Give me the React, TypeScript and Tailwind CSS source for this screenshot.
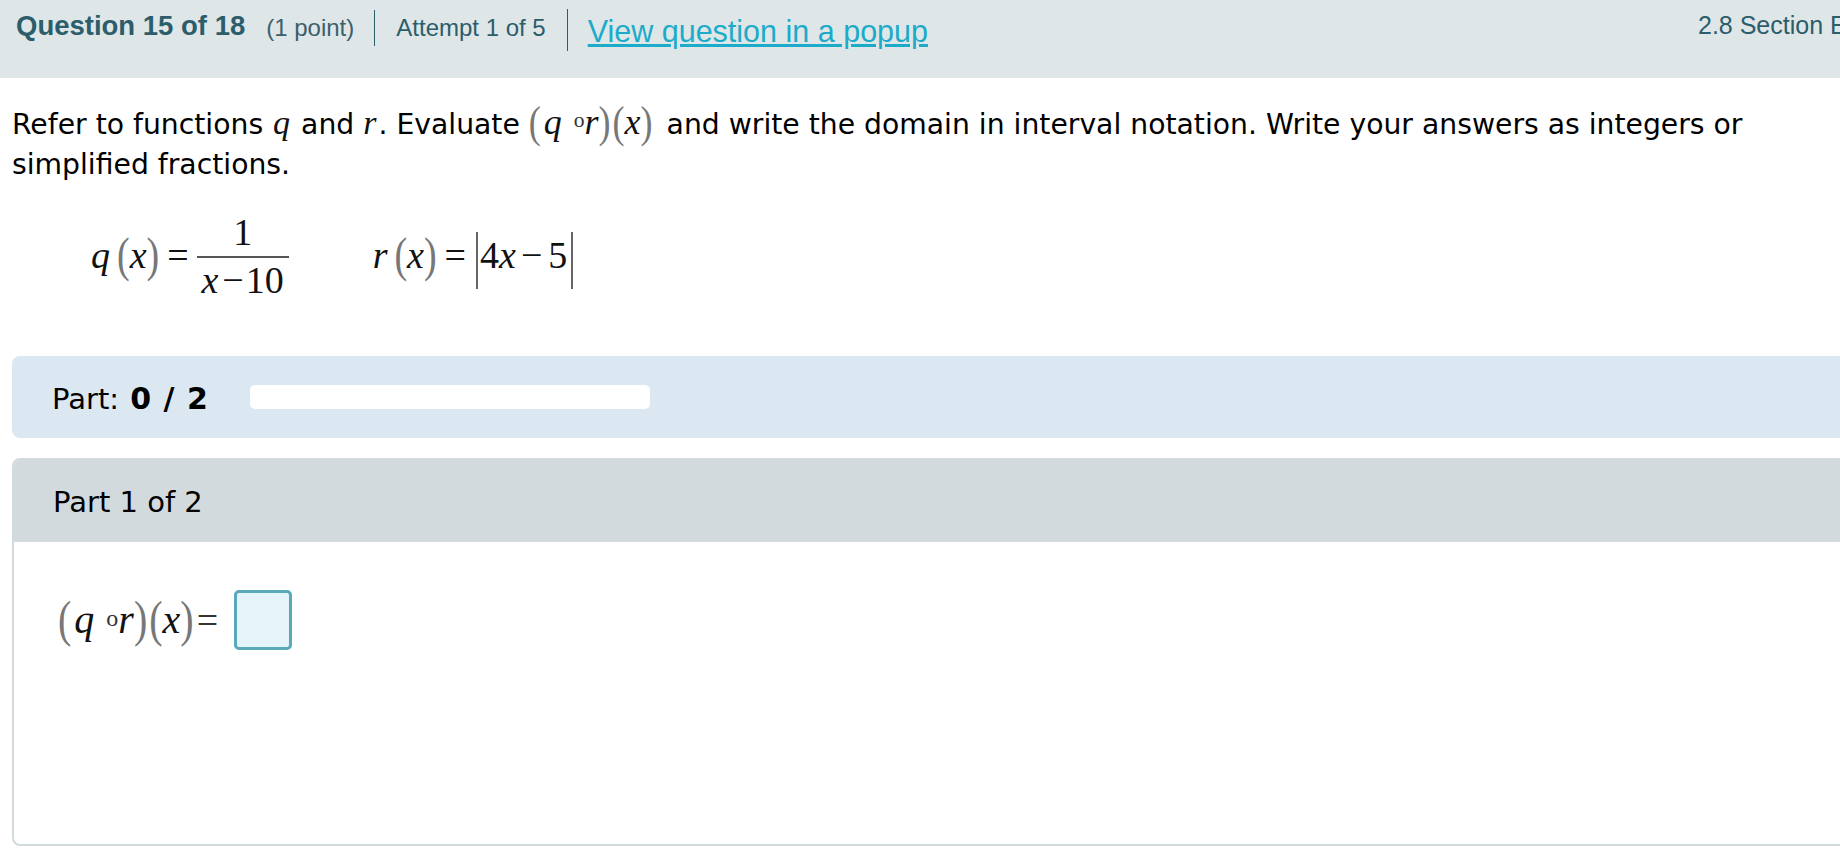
const serif = "font-['Liberation_Serif',serif]";

function Paren({ c, className = "" }: { c: string; className?: string }) {
  return <span className={`${serif} not-italic font-normal text-[#777] scale-y-125 inline-block ${className}`}>{c}</span>;
}

function Var({ c, className = "" }: { c: string; className?: string }) {
  return <i className={`${serif} text-[#111] ${className}`}>{c}</i>;
}

function Compose({ size, className = "" }: { size: string; className?: string }) {
  return (
    <span className={`inline-flex items-baseline leading-none align-baseline ${size} ${serif} ${className}`}>
      <Paren c="(" />
      <span className="ml-[3px]"><Var c="q" /></span>
      <span className="ml-[12px] text-[0.6em] relative bottom-[7px] text-[#333]">o</span>
      <Var c="r" />
      <Paren c=")" />
      <Paren c="(" className="ml-[2px]" />
      <Var c="x" />
      <Paren c=")" />
    </span>
  );
}

export default function App() {
  return (
    <div className="w-[1840px] h-[852px] overflow-hidden bg-white font-['DejaVu_Sans',sans-serif] text-black">
      <div className="w-[1900px]">
        <header className="h-[78px] bg-[#dfe6e8] flex items-start justify-between pl-[16px] font-['Liberation_Sans',sans-serif] text-[#2b5d6b] whitespace-nowrap">
          <div className="flex items-start">
            <span className="text-[27.5px] font-bold mt-[11px] leading-[30px]">Question 15 of 18</span>
            <span className="text-[24px] ml-[21px] mt-[14px] leading-[28px] text-[#3d5f6a]">(1 point)</span>
            <span className="w-[1px] h-[36px] bg-[#2b5d6b] ml-[20px] mt-[10px]" />
            <span className="text-[24px] ml-[21px] mt-[14px] leading-[28px]">Attempt 1 of 5</span>
            <span className="w-[1px] h-[42px] bg-[#2b5d6b] ml-[21px] mt-[9px]" />
            <a className="text-[30.5px] text-[#1cabc9] underline ml-[20px] mt-[14px] leading-[34px]">View question in a popup</a>
          </div>
          <span className="text-[25px] mt-[11px] leading-[28px] w-[202px]">2.8 Section Exercises</span>
        </header>

        <p className="text-[28.25px] leading-[40px] pl-[12px] mt-[26px] whitespace-nowrap">
          Refer to functions <Var c="q" className="text-[34px] leading-none ml-[1px] mr-[2px]" /> and <Var c="r" className="text-[34px] leading-none mr-[2px]" />. Evaluate <Compose size="text-[36px]" className="mr-[5px]" /> and write the domain in interval notation. Write your answers as integers or
          <br />
          simplified fractions.
        </p>

        <div className={`flex items-center mt-[26px] pl-[91px] h-[88px] ${serif} text-[38px] text-[#111] whitespace-nowrap`}>
          <Var c="q" />
          <Paren c="(" className="ml-[7px]" />
          <Var c="x" />
          <Paren c=")" />
          <span className="ml-[8px]">=</span>
          <span className="flex flex-col items-center ml-[8px] w-[92px]">
            <span className="leading-[48px]">1</span>
            <span className="h-[2px] w-full bg-[#555]" />
            <span className="leading-[44px]"><Var c="x" /><span className="ml-[4px]">−</span><span className="ml-[2px]">10</span></span>
          </span>
          <span className="ml-[84px]"><Var c="r" /></span>
          <Paren c="(" className="ml-[7px]" />
          <Var c="x" />
          <Paren c=")" />
          <span className="ml-[8px]">=</span>
          <span className="ml-[10px] mt-[10px] w-[2px] h-[57px] bg-[#666]" />
          <span className="ml-[2px]">4</span>
          <Var c="x" />
          <span className="ml-[5px]">−</span>
          <span className="ml-[6px]">5</span>
          <span className="ml-[4px] mt-[10px] w-[2px] h-[57px] bg-[#666]" />
        </div>

        <div className="mt-[57px] ml-[12px] h-[82px] bg-[#dce8f1] rounded-l-[8px] flex items-center pl-[40px] pt-[3px] text-[29px]">
          <span className="w-[198px] whitespace-nowrap">Part: <b className="text-[30px] ml-[2px] tracking-[1px]">0 / 2</b></span>
          <span className="w-[400px] h-[24px] bg-white rounded-[5px] -mt-[3px]" />
        </div>

        <section className="mt-[20px] ml-[12px] h-[388px] rounded-l-[8px] border-2 border-r-0 border-[#d2dade] overflow-hidden">
          <div className="h-[82px] bg-[#d2dade] flex items-center pl-[39px] pt-[3px] text-[29px]">Part 1 of 2</div>
          <div className="flex items-center pl-[44px] mt-[48px]">
            <Compose size="text-[40px]" />
            <span className={`${serif} text-[38px] ml-[3px] text-[#333]`}>=</span>
            <span className="ml-[16px] w-[58px] h-[60px] bg-[#e5f4f8] border-[3px] border-[#5aa9b8] rounded-[5px]" />
          </div>
        </section>
      </div>
    </div>
  );
}
